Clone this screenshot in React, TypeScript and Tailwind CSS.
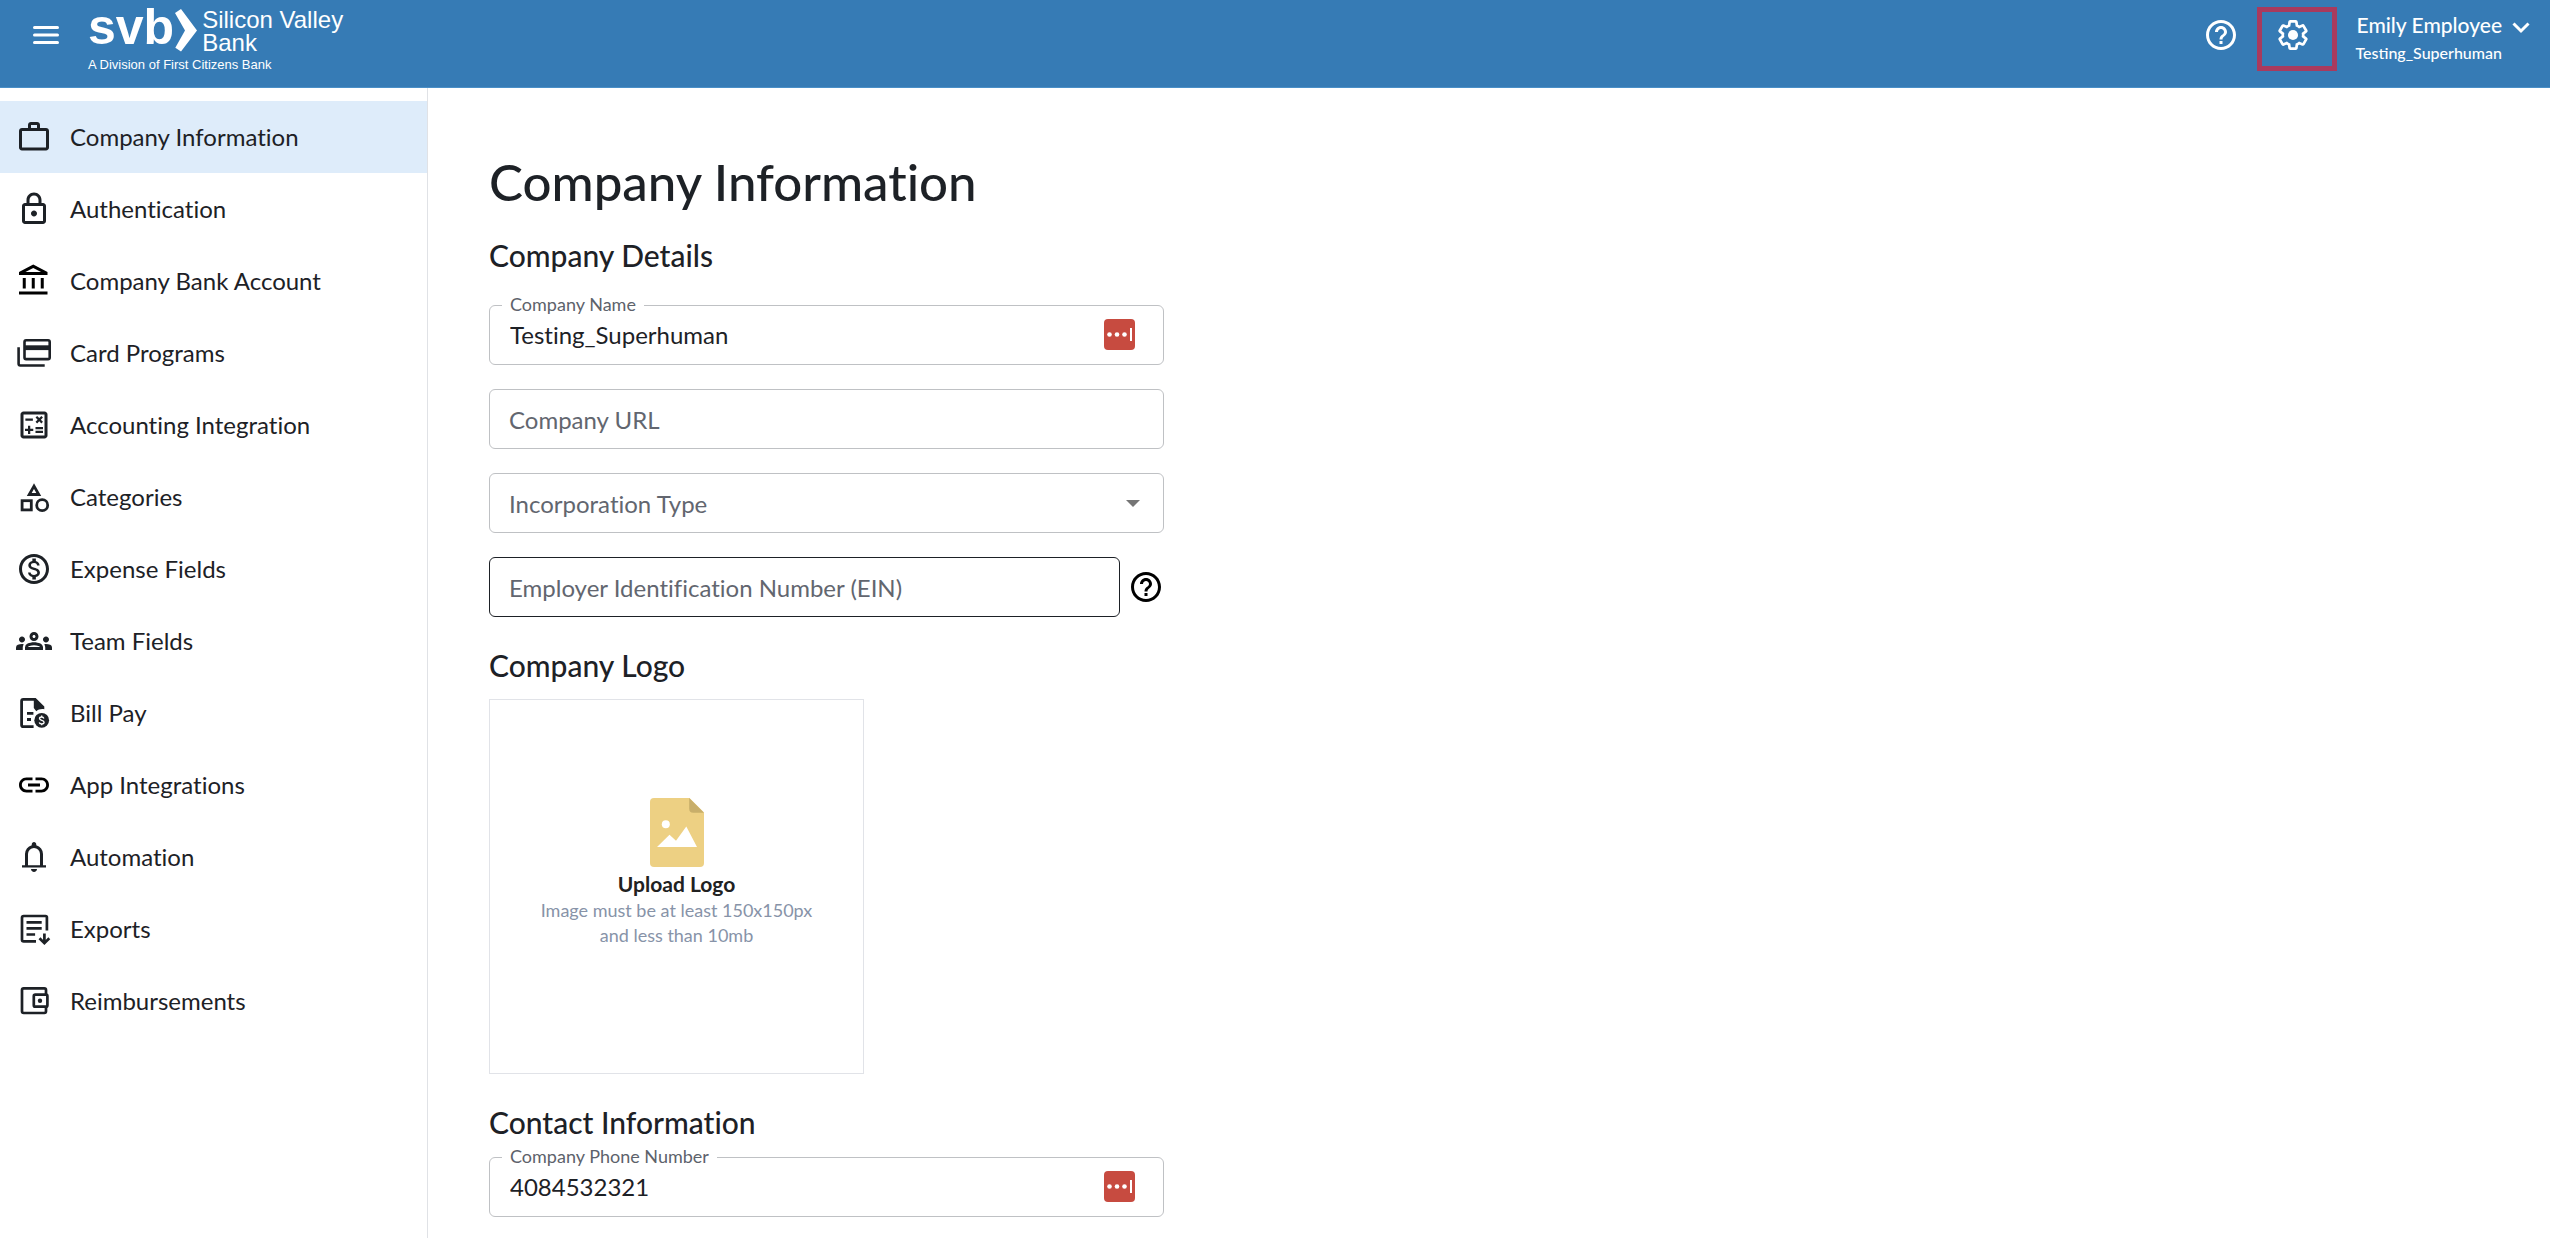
import type { ReactNode } from "react";
import {
  MdHelpOutline,
  MdLink,
  MdOutlineAccountBalance,
  MdOutlineCalculate,
  MdOutlineGroups,
  MdOutlineLock,
  MdOutlineMonetizationOn,
  MdWorkOutline,
} from "react-icons/md";

type IconProps = { className?: string };

function GearIcon({ className }: IconProps) {
  return (
    <svg viewBox="0 0 24 24" className={className}>
      <g transform="translate(1.1 1.1) scale(.908)">
        <path
          d="M19.43 12.98c.04-.32.07-.64.07-.98 0-.34-.03-.66-.07-.98l2.11-1.65c.19-.15.24-.42.12-.64l-2-3.46a.5.5 0 00-.61-.22l-2.49 1c-.52-.4-1.08-.73-1.69-.98l-.38-2.65A.488.488 0 0014 2h-4c-.25 0-.46.18-.49.42l-.38 2.65c-.61.25-1.17.59-1.69.98l-2.49-1a.566.566 0 00-.18-.03c-.17 0-.34.09-.43.25l-2 3.46c-.13.22-.07.49.12.64l2.11 1.65c-.04.32-.07.65-.07.98 0 .33.03.66.07.98l-2.11 1.65c-.19.15-.24.42-.12.64l2 3.46a.5.5 0 00.61.22l2.49-1c.52.4 1.08.73 1.69.98l.38 2.65c.03.24.24.42.49.42h4c.25 0 .46-.18.49-.42l.38-2.65c.61-.25 1.17-.59 1.69-.98l2.49 1c.06.02.12.03.18.03.17 0 .34-.09.43-.25l2-3.46c.12-.22.07-.49-.12-.64l-2.11-1.65z"
          fill="none"
          stroke="currentColor"
          strokeWidth="2"
        />
        <circle cx="12" cy="12" r="3.7" fill="currentColor" />
      </g>
    </svg>
  );
}

function CardsIcon({ className }: IconProps) {
  return (
    <svg viewBox="0 0 36 36" fill="none" stroke="currentColor" className={className}>
      <rect x="8.5" y="5.3" width="25.2" height="18.8" rx="1.6" strokeWidth="2.6" />
      <path d="M8.5 12.7h25" strokeWidth="4.8" />
      <path d="M2.6 12.2v16.6c0 1 .7 1.7 1.7 1.7h24.4" strokeWidth="2.6" />
    </svg>
  );
}

function CategoriesIcon({ className }: IconProps) {
  return (
    <svg viewBox="0 0 36 36" fill="none" stroke="currentColor" strokeWidth="2.8" className={className}>
      <path d="M18 7.1l-4.8 8.4h9.6z" />
      <rect x="6.1" y="21.7" width="9.2" height="9.2" />
      <circle cx="26.2" cy="26.2" r="5.5" />
    </svg>
  );
}

function BillIcon({ className }: IconProps) {
  return (
    <svg viewBox="0 0 36 36" fill="none" stroke="currentColor" className={className}>
      <path d="M17.6 31.6H7.3c-1 0-1.7-.7-1.7-1.7V6.1c0-1 .7-1.7 1.7-1.7H19" strokeWidth="2.8" />
      <path d="M17.8 3h1.9l8.6 8.6v2.6c-3.4-.6-6 .3-8 2L17.8 13z" fill="currentColor" stroke="none" />
      <path d="M11 18.4h6.4M11 24.5h4" strokeWidth="2.8" />
      <circle cx="25.7" cy="25.3" r="7.4" fill="currentColor" stroke="none" />
      <path
        d="M27.9 23.4c-.4-1-1.2-1.4-2.2-1.4-1.3 0-2.2.6-2.2 1.6 0 2.4 4.6 1 4.6 3.6 0 1-1 1.7-2.4 1.7-1.2 0-2.1-.5-2.5-1.5M25.7 20.5v1.5M25.7 28.8v1.5"
        stroke="#fff"
        strokeWidth="1.3"
      />
    </svg>
  );
}

function BellIcon({ className }: IconProps) {
  return (
    <svg viewBox="0 0 24 24" fill="currentColor" className={className}>
      <path d="M4 19v-1.5h2v-7.5q0-2.075 1.25-3.688T10.5 4.2v-.7q0-.625.438-1.062T12 2t1.063.438T13.5 3.5v.7q2 .5 3.25 2.113T18 10v7.5h2V19zm8 3q-.825 0-1.412-.587T10 20h4q0 .825-.587 1.413T12 22m-4-4.5h8v-7.5q0-1.65-1.175-2.825T12 6T9.175 7.175T8 10z" />
    </svg>
  );
}

function ExportsIcon({ className }: IconProps) {
  return (
    <svg viewBox="0 0 36 36" fill="none" stroke="currentColor" strokeWidth="2.7" className={className}>
      <path d="M20 30.4H7.7c-1 0-1.7-.7-1.7-1.7V6.7c0-1 .7-1.7 1.7-1.7h21.8c.8 0 1.4.6 1.4 1.4v13" />
      <path d="M10.5 11.3h15.2M10.5 17.4h15.2M10.5 23.5h8.6" />
      <path d="M28.4 22.5v9M23.5 27.2l4.9 4.9 4.9-4.9" />
    </svg>
  );
}

function WalletIcon({ className }: IconProps) {
  return (
    <svg viewBox="0 0 36 36" fill="none" stroke="currentColor" strokeWidth="2.7" className={className}>
      <path d="M30 11V7c0-1-.7-1.7-1.7-1.7H7.7C6.7 5.3 6 6 6 7v21.3c0 1 .7 1.7 1.7 1.7h20.6c1 0 1.7-.7 1.7-1.7V24" />
      <rect x="17.8" y="11.7" width="13.6" height="12" rx="1.5" />
      <circle cx="24" cy="17.7" r="2.2" fill="currentColor" stroke="none" />
    </svg>
  );
}

const navItems = [
  { label: "Company Information", icon: MdWorkOutline, active: true },
  { label: "Authentication", icon: MdOutlineLock },
  { label: "Company Bank Account", icon: MdOutlineAccountBalance, dark: true },
  { label: "Card Programs", icon: CardsIcon },
  { label: "Accounting Integration", icon: MdOutlineCalculate },
  { label: "Categories", icon: CategoriesIcon },
  { label: "Expense Fields", icon: MdOutlineMonetizationOn },
  { label: "Team Fields", icon: MdOutlineGroups },
  { label: "Bill Pay", icon: BillIcon },
  { label: "App Integrations", icon: MdLink, dark: true },
  { label: "Automation", icon: BellIcon },
  { label: "Exports", icon: ExportsIcon },
  { label: "Reimbursements", icon: WalletIcon },
];

function Logo() {
  return (
    <a href="#" className="flex flex-col font-['Liberation_Sans',sans-serif] text-white">
      <span className="flex h-14 items-start">
        <span className="text-[50px] leading-[54px] font-bold">svb</span>
        <svg viewBox="0 0 24 44" className="mt-2 h-11 w-6" fill="currentColor">
          <path d="M1 5l6-4 16 21.5L7 43.5l-5.7-3.8L11 22.5z" />
        </svg>
        <span className="mt-2 ml-1 text-2xl leading-[23px]">
          Silicon Valley
          <br />
          Bank
        </span>
      </span>
      <span className="text-[13px] leading-[18px]">A Division of First Citizens Bank</span>
    </a>
  );
}

function Header() {
  return (
    <header className="flex h-[88px] items-start justify-between border-b border-[#4a8fc7] bg-[#367bb5] pr-5 pl-7 text-white">
      <div className="flex items-start gap-6">
        <button type="button" aria-label="Menu" className="mt-[17px]">
          <svg viewBox="0 0 36 36" className="size-9" stroke="currentColor" strokeWidth="3" strokeLinecap="round">
            <path d="M6.5 10.5h23M6.5 18h23M6.5 25.5h23" />
          </svg>
        </button>
        <Logo />
      </div>
      <div className="flex items-start pt-[7px]">
        <button type="button" aria-label="Help" className="mt-2.5 mr-[18px]">
          <MdHelpOutline className="size-9" />
        </button>
        <button
          type="button"
          aria-label="Settings"
          className="flex h-16 w-20 items-start border-5 border-[#a93a5e] pt-[5px] pl-[13px]"
        >
          <GearIcon className="size-9" />
        </button>
        <button type="button" className="ml-[18px] flex items-start gap-2.5">
          <span className="text-right">
            <span className="block text-[21px] leading-9 font-medium">Emily Employee</span>
            <span className="block text-base leading-5 font-medium [font-variant-ligatures:normal]">
              Testing_Superhuman
            </span>
          </span>
          <svg viewBox="0 0 18 12" className="mt-[15px] h-3 w-[18px]" fill="none" stroke="currentColor" strokeWidth="3">
            <path d="M1.5 1.5L9 9l7.5-7.5" />
          </svg>
        </button>
      </div>
    </header>
  );
}

function Sidebar() {
  return (
    <nav className="w-[428px] shrink-0 border-r border-[#e0e2e6] pt-[13px]">
      <ul>
        {navItems.map(({ label, icon: Icon, active, dark }) => (
          <li key={label}>
            <a
              href="#"
              aria-current={active ? "page" : undefined}
              className={`flex h-18 items-center gap-[18px] pl-4 text-2xl ${active ? "bg-[#deecfa]" : ""}`}
            >
              <Icon className={`size-9 shrink-0 ${dark ? "text-black" : ""}`} />
              {label}
            </a>
          </li>
        ))}
      </ul>
    </nav>
  );
}

function PasswordBadge() {
  return (
    <button type="button" aria-label="Fill from password manager" className="mr-7 mb-0.5 shrink-0">
      <svg viewBox="0 0 31 31" className="size-[31px]" fill="#fff">
        <rect width="31" height="31" rx="4" fill="#c74b40" />
        <circle cx="5.5" cy="15.5" r="2.3" />
        <circle cx="13" cy="15.5" r="2.3" />
        <circle cx="20.5" cy="15.5" r="2.3" />
        <rect x="26" y="9" width="2" height="13" />
      </svg>
    </button>
  );
}

function FilledField({ id, label, value }: { id: string; label: string; value: string }) {
  return (
    <div className="relative flex h-15 items-center rounded-md border border-[#bfc1c4]">
      <label htmlFor={id} className="absolute -top-3.5 left-3 bg-white px-2 text-lg leading-6 text-[#5d626b]">
        {label}
      </label>
      <input id={id} defaultValue={value} className="h-full min-w-0 flex-1 pb-0.5 pl-5 text-2xl outline-none" />
      <PasswordBadge />
    </div>
  );
}

// Resting label, sits inside the empty control
function RestingLabel({ htmlFor, children }: { htmlFor: string; children: ReactNode }) {
  return (
    <label
      htmlFor={htmlFor}
      className="pointer-events-none absolute inset-y-0 left-5 flex items-center pt-0.5 text-2xl text-[#62666f]"
    >
      {children}
    </label>
  );
}

function SectionTitle({ children }: { children: ReactNode }) {
  return <h2 className="text-[30px] leading-10 font-medium">{children}</h2>;
}

export default function App() {
  return (
    <div className="flex min-h-screen flex-col bg-white font-['Lato',sans-serif] text-[#1d2126] [font-variant-ligatures:none]">
      <Header />
      <div className="flex flex-1">
        <Sidebar />
        <main className="min-w-0 flex-1 px-[61px] pt-16 pb-5">
          <h1 className="text-[51px] leading-15 font-medium">Company Information</h1>

          <form className="max-w-[675px]">
            <div className="mt-[23px]">
              <SectionTitle>Company Details</SectionTitle>
            </div>

            <div className="mt-[30px] flex flex-col gap-6">
              <FilledField id="company-name" label="Company Name" value="Testing_Superhuman" />

              <div className="relative">
                <input
                  id="company-url"
                  className="block h-15 w-full rounded-md border border-[#bfc1c4] px-5 text-2xl"
                />
                <RestingLabel htmlFor="company-url">Company URL</RestingLabel>
              </div>

              <div className="relative">
                <select
                  id="incorporation-type"
                  className="block h-15 w-full appearance-none rounded-md border border-[#bfc1c4] px-5 text-2xl"
                >
                  <option value="" />
                </select>
                <RestingLabel htmlFor="incorporation-type">Incorporation Type</RestingLabel>
                <svg viewBox="0 0 14 7" className="pointer-events-none absolute top-[27px] right-6 h-[7px] w-3.5" fill="#757575">
                  <path d="M0 0h14L7 7z" />
                </svg>
              </div>

              <div className="flex items-center gap-2">
                <div className="relative min-w-0 flex-1">
                  <input
                    id="ein"
                    className="block h-15 w-full rounded-md border border-[#1d2126] px-5 text-2xl"
                  />
                  <RestingLabel htmlFor="ein">Employer Identification Number (EIN)</RestingLabel>
                </div>
                <button type="button" aria-label="About the EIN" className="text-black">
                  <MdHelpOutline className="size-9" />
                </button>
              </div>
            </div>

            <div className="mt-7">
              <SectionTitle>Company Logo</SectionTitle>
            </div>

            {/* Logo drop area */}
            <label className="relative mt-3.5 flex size-[375px] flex-col items-center border border-[#e1e3e8] pt-[98px] text-center">
              <input type="file" accept="image/*" className="absolute inset-0 opacity-0" />
              <svg viewBox="0 0 54 69" className="h-[69px] w-[54px]">
                <path d="M4 0h35.5L54 14.5V65a4 4 0 0 1-4 4H4a4 4 0 0 1-4-4V4a4 4 0 0 1 4-4z" fill="#edd083" />
                <path d="M39.2 0L54 14.8H43.2a4 4 0 0 1-4-4z" fill="#c8ae6a" />
                <circle cx="15.8" cy="26.3" r="4" fill="#fff" />
                <path d="M7 49l12.5-12.3 6.5 6L36.3 28.5 47 49z" fill="#fff" />
              </svg>
              <span className="mt-[3px] text-[21px] leading-7 font-bold text-[#212121]">Upload Logo</span>
              <span className="text-lg leading-[25px] text-[#8793a8]">
                Image must be at least 150x150px
                <br />
                and less than 10mb
              </span>
            </label>

            <div className="mt-7">
              <SectionTitle>Contact Information</SectionTitle>
            </div>
            <div className="mt-[15px]">
              <FilledField id="company-phone" label="Company Phone Number" value="4084532321" />
            </div>
          </form>
        </main>
      </div>
    </div>
  );
}
